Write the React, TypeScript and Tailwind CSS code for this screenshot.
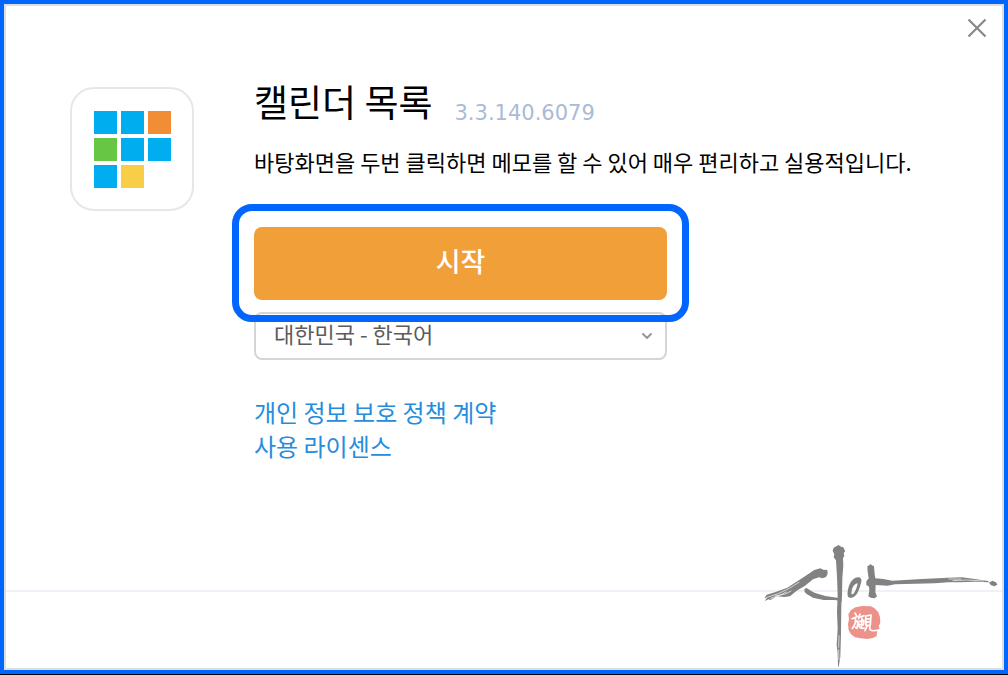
import React from 'react';
import { ChevronDown } from 'lucide-react';

const LANGUAGES = ['대한민국 - 한국어'];

const TILES = [
  'bg-[#00adef]',
  'bg-[#00adef]',
  'bg-[#f08d35]',
  'bg-[#67c644]',
  'bg-[#00adef]',
  'bg-[#00adef]',
  'bg-[#00adef]',
  'bg-[#f8ce46]',
];

const AppIcon: React.FC = () => (
  <div className="mt-1 flex size-[124px] shrink-0 items-center justify-center rounded-[24px] border-2 border-[#e7e7e7]">
    <div className="grid grid-cols-3 gap-1">
      {TILES.map((tile, index) => (
        <span key={index} className={`size-[23px] ${tile}`} />
      ))}
    </div>
  </div>
);

// Brush signature with its red seal
const Signature: React.FC = () => (
  <svg
    viewBox="0 0 759 420"
    className="pointer-events-none absolute -right-[6px] -bottom-[7px] h-[140px] w-[253px]"
    aria-hidden="true"
  >
    <g fill="#828282">
      <path d="M28 190 L35 179 L62 171 L97 158 L150 124 L178 105 L196 100 L205 104 L217 105 L218 116 L213 126 L203 130 L192 127 L174 133 L150 152 L124 168 L105 184 L88 186 L66 184 L46 195 L41 193 L29 198 L37 187 Z" />
      <path d="M148 162 L155 159 L164 165 L178 173 L211 183 L246 188 L259 190 L260 199 L240 195 L206 195 L174 188 L155 177 L149 171 Z" />
      <path d="M236 38 L244 34 L251 30 L258 35 L265 37 L269 46 L271 49 L266 54 L268 62 L264 70 L265 91 L262 130 L261 183 L259 211 L258 295 L256 365 L251 396 L249 394 L248 355 L245 330 L248 282 L246 230 L248 180 L246 125 L243 76 L236 67 L238 58 L233 47 Z" />
      <path
        fillRule="evenodd"
        d="M281 155 C287 139 297 127 309 127 C319 127 322 135 317 148 C312 165 306 185 291 188 C278 191 274 181 281 155 Z M291 163 C289 174 288 180 293 178 C300 175 307 153 308 145 C301 146 294 152 291 163 Z"
      />
      <path d="M337 94 L343 91 L346 87 L351 91 L357 94 L359 116 L361 130 L385 132 L412 137 L500 132 L579 128 L620 127 L659 132 L699 138 L703 142 L660 140 L615 142 L580 142 L540 145 L420 148 L398 152 L362 150 L361 172 L366 184 L359 190 L347 188 L340 184 L343 166 L342 155 L334 150 L334 139 L341 130 L338 110 Z" />
      <path d="M702 143 L712 137 L723 142 L727 149 L718 154 L708 151 Z" />
    </g>
    <g fill="none" stroke="#fff" strokeWidth="2" strokeLinecap="round">
      <path d="M36 187 L70 176 L103 160 L132 142" />
      <path d="M47 190 L76 180 L94 171" />
      <path d="M61 183 L91 177 L108 168" />
      <path d="M582 132 L618 132 M594 137 L635 135 L685 138" />
      <path d="M252 302 L251 337 M251 344 L252 374" />
    </g>
    <path
      fill="#ed928a"
      d="M301 217 L322 213 L347 214 L358 219 L370 232 L375 247 L376 263 L371 274 L374 280 L366 290 L365 303 L354 309 L336 312 L317 310 L300 307 L288 298 L281 286 L279 267 L282 252 L280 238 L288 225 Z"
    />
    <g fill="none" stroke="#fff" strokeWidth="5" strokeLinecap="round" strokeLinejoin="round">
      <path d="M300 234 L304 241 M291 251 L309 244 M301 248 C304 262 299 272 292 280 M302 260 L309 258 L306 280 L301 277" />
      <path d="M315 237 L311 251 M315 246 L327 242 M315 259 L327 256 L325 270 L315 269 M321 249 L319 278 M311 262 C309 275 315 283 328 279" />
      <path d="M332 243 L348 240 L346 270 L333 272 Z M333 252 L346 251 M333 262 L345 260 M337 273 L330 287 M344 271 L345 284 C353 290 361 287 370 285" />
    </g>
  </svg>
);

export default function App() {
  return (
    <div className="flex min-h-screen flex-col border-b border-black bg-[#0066ff] p-1 font-['Noto_Sans_CJK_KR','Liberation_Sans',sans-serif] text-black">
      <main className="relative flex grow flex-col border-2 border-[#dedede] bg-white">
        <button
          type="button"
          aria-label="닫기"
          className="absolute top-[11px] right-[14px] flex size-[22px] items-center justify-center text-[#888888]"
        >
          <svg viewBox="0 0 20 20" className="size-5" fill="none" stroke="currentColor" strokeWidth="2.2">
            <path d="M1.500 1.500 18.500 18.500M18.500 1.500 1.500 18.500" />
          </svg>
        </button>

        <div className="flex grow items-start gap-[60px] px-16 pt-[77px]">
          <AppIcon />

          <div className="min-w-0 grow">
            <div className="flex items-start gap-[22px]">
              <h1 className="text-[37px] leading-9">캘린더 목록</h1>
              <span className="pt-[18px] font-['DejaVu_Sans',sans-serif] text-[21px] leading-6 text-[#a9bbd6]">
                3.3.140.6079
              </span>
            </div>
            <p className="mt-5 text-[22px] leading-8 whitespace-nowrap">
              바탕화면을 두번 클릭하면 메모를 할 수 있어 매우 편리하고 실용적입니다.
            </p>

            <div className="mt-[50px] max-w-[413px]">
              <div className="relative z-10">
                <button
                  type="button"
                  className="h-[73px] w-full rounded-lg bg-[#f19f39] pb-[6px] text-[27px] leading-8 font-medium text-white"
                >
                  시작
                </button>
                <div className="pointer-events-none absolute -inset-x-[22px] -top-[23px] -bottom-[22px] rounded-[20px] border-[7px] border-[#0066ff]" />
              </div>

              <div className="relative mt-3">
                <select
                  aria-label="언어"
                  className="h-12 w-full appearance-none rounded-lg border-2 border-[#d5d5d5] bg-white pr-10 pb-[6px] pl-[18px] text-[22px] leading-8 text-[#5c5c5c]"
                >
                  {LANGUAGES.map((language) => (
                    <option key={language}>{language}</option>
                  ))}
                </select>
                <ChevronDown
                  className="pointer-events-none absolute top-4 right-3 size-4 text-[#999999]"
                  strokeWidth={3}
                />
              </div>
            </div>

            <nav className="mt-[35px] flex flex-col items-start text-2xl leading-[34px] text-[#268ddd]">
              <a href="#privacy">개인 정보 보호 정책 계약</a>
              <a href="#license">사용 라이센스</a>
            </nav>
          </div>
        </div>

        <footer className="h-[78px] border-t-2 border-[#f0f0f8]" />
        <Signature />
      </main>
    </div>
  );
}
